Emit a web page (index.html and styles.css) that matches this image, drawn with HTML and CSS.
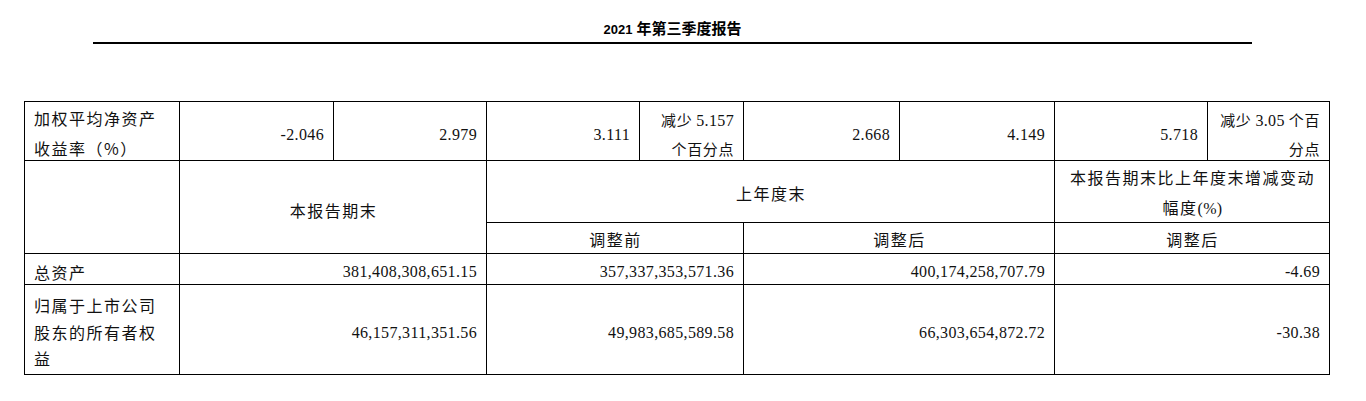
FILE: index.html
```html
<!DOCTYPE html>
<html lang="zh-CN">
<head>
<meta charset="utf-8">
<title>2021年第三季度报告</title>
<link rel="stylesheet" href="styles.css">
</head>
<body>
<header class="doc-header">
  <h1 class="doc-title"><span class="yr">2021</span> 年第三季度报告</h1>
</header>
<div class="grid">
  <div class="c lbl r1"><span class="t">加权平均净资产<br>收益率（%）</span></div>
  <div class="c num r1n"><span class="t">-2.046</span></div>
  <div class="c num r1n"><span class="t">2.979</span></div>
  <div class="c num r1n"><span class="t">3.111</span></div>
  <div class="c mix r1m"><span class="t">减少 <span class="n">5.157</span><br>个百分点</span></div>
  <div class="c num r1n"><span class="t">2.668</span></div>
  <div class="c num r1n"><span class="t">4.149</span></div>
  <div class="c num r1n"><span class="t">5.718</span></div>
  <div class="c mix r1m"><span class="t">减少 <span class="n">3.05</span> 个百<br>分点</span></div>

  <div class="c blank span-rows"></div>
  <div class="c hd span-rows s23 hd-main"><span class="t">本报告期末</span></div>
  <div class="c hd s47 hd-top"><span class="t">上年度末</span></div>
  <div class="c hd s89 hd-top"><span class="t">本报告期末比上年度末增减变动<br>幅度<span class="n">(%)</span></span></div>
  <div class="c hd s45 hd-sub"><span class="t">调整前</span></div>
  <div class="c hd s67 hd-sub"><span class="t">调整后</span></div>
  <div class="c hd s89 hd-sub"><span class="t">调整后</span></div>

  <div class="c lbl r4"><span class="t">总资产</span></div>
  <div class="c num s23 r4"><span class="t">381,408,308,651.15</span></div>
  <div class="c num s45 r4"><span class="t">357,337,353,571.36</span></div>
  <div class="c num s67 r4"><span class="t">400,174,258,707.79</span></div>
  <div class="c num s89 r4"><span class="t">-4.69</span></div>

  <div class="c lbl r5"><span class="t">归属于上市公司<br>股东的所有者权<br>益</span></div>
  <div class="c num s23 r5n"><span class="t">46,157,311,351.56</span></div>
  <div class="c num s45 r5n"><span class="t">49,983,685,589.58</span></div>
  <div class="c num s67 r5n"><span class="t">66,303,654,872.72</span></div>
  <div class="c num s89 r5n"><span class="t">-30.38</span></div>
</div>
</body>
</html>
```
FILE: styles.css
```css
html, body {
  margin: 0;
  padding: 0;
  background: #fff;
}
body {
  color: #111;
  font-family: "Liberation Serif", "Noto Sans CJK SC", serif;
}
.doc-header {
  margin-left: 93px;
  width: 1159px;
  padding-top: 19px;
  border-bottom: 2px solid #000;
}
.doc-title {
  margin: 0;
  padding-bottom: 2px;
  text-align: center;
  font-family: "Liberation Sans", "Noto Sans CJK SC", sans-serif;
  font-weight: 700;
  font-size: 15px;
  line-height: 20px;
  color: #000;
}
.doc-title .yr {
  font-size: 13px;
}
.grid {
  margin: 57px 0 0 24px;
  width: 1305px;
  display: grid;
  grid-template-columns: 155px 154px 153px 153px 104px 156px 155px 153px 122px;
  grid-template-rows: 59px 62px 31px 31px 90px;
  border-top: 1px solid #000;
  border-left: 1px solid #000;
}
.c {
  box-sizing: border-box;
  border-right: 1px solid #000;
  border-bottom: 1px solid #000;
  display: flex;
  align-items: center;
  padding: 0 9px;
  font-family: "Noto Sans CJK SC", sans-serif;
  font-size: 16px;
  letter-spacing: 1.5px;
  white-space: nowrap;
}
.t {
  display: block;
}
.lbl {
  justify-content: flex-start;
  line-height: 30px;
}
.num {
  justify-content: flex-end;
  font-family: "Liberation Serif", serif;
  letter-spacing: 0.35px;
  padding-right: 9px;
}
.mix {
  justify-content: flex-end;
  text-align: right;
  line-height: 28px;
  padding-right: 9px;
  font-size: 15px;
  letter-spacing: 0.6px;
}
.n {
  font-family: "Liberation Serif", serif;
  font-size: 16px;
  letter-spacing: 0.35px;
}
.hd {
  justify-content: center;
  text-align: center;
  line-height: 30px;
  padding-left: 10px;
}
.span-rows { grid-row: span 2; }
.s23 { grid-column: span 2; }
.s45 { grid-column: span 2; }
.s67 { grid-column: span 2; }
.s89 { grid-column: span 2; }
.s47 { grid-column: span 4; }

.r1 { padding-top: 4px; }
.r1n { padding-top: 8px; }
.r1m { padding-top: 6px; }
.hd-main { padding-top: 6px; }
.hd-top { padding-top: 3px; }
.hd-sub { padding-top: 2px; }
.r4 { padding-top: 5px; line-height: 20px; }
.lbl.r5 { padding-top: 5px; line-height: 26.5px; }
.r5n { padding-top: 7px; }
```
